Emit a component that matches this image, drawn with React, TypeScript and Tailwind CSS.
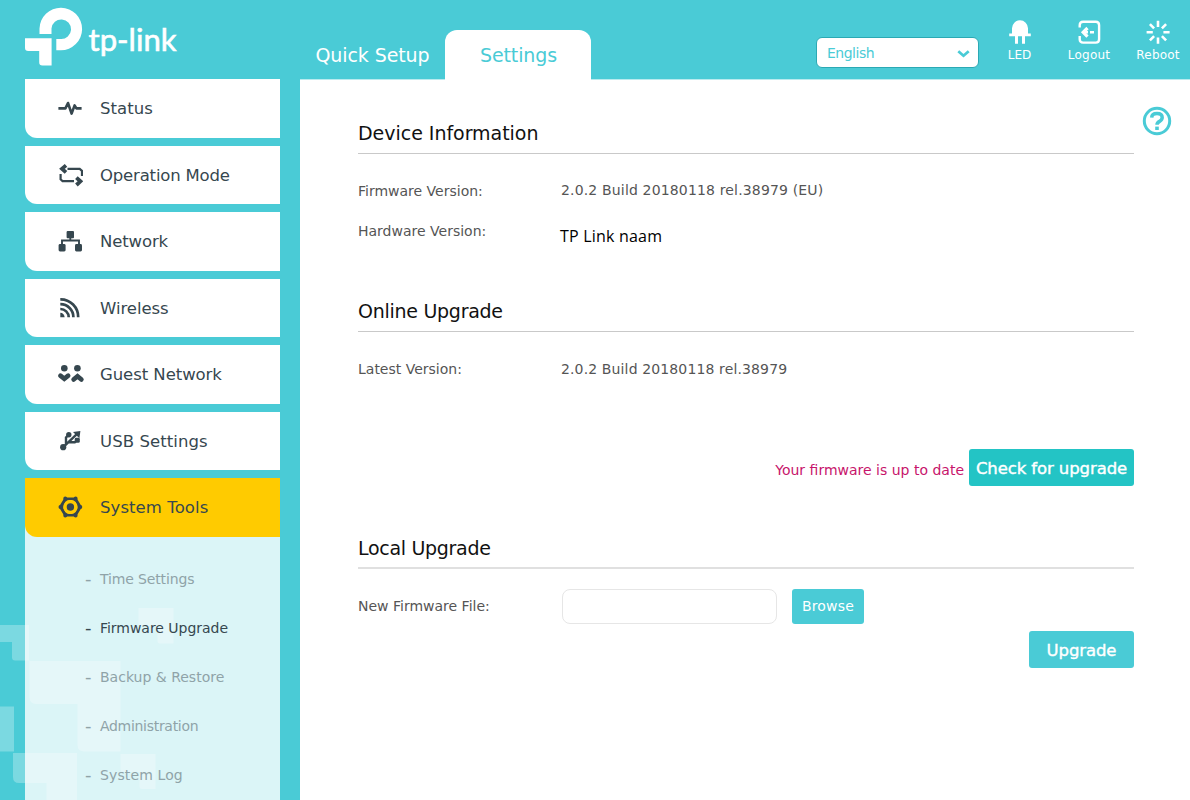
import React from "react";
import clsx from "clsx";

const StatusIcon = () => (
  <svg width="26" height="26" viewBox="0 0 26 26" fill="none" stroke="#36474f" strokeWidth="2.6">
    <path d="M1.4 13.4h7l2.6-5.4 3.6 10.6 3-8.2 1.8 3h5.2" strokeLinejoin="round" />
  </svg>
);

const ModeIcon = () => (
  <svg width="26" height="26" viewBox="0 0 26 26" fill="none" stroke="#36474f" strokeWidth="2.2">
    <path d="M10.5 6.8h12.2l2.3 2v5.2M3.6 12V17.2l2 2H17" />
    <path d="M9 3.4 5 6.8l4 3.6M19.4 15.6l4 3.7-4 3.7" strokeWidth="3.8" />
  </svg>
);

const NetworkIcon = () => (
  <svg width="26" height="26" viewBox="0 0 26 26" fill="#36474f">
    <rect x="9.6" y="3" width="7.4" height="7.2" rx="1" />
    <rect x="1.6" y="16" width="7" height="7.4" rx="1.4" />
    <rect x="18" y="16" width="7" height="7.4" rx="1.4" />
    <path d="M13.3 10v3.2M5 17v-4.5h17V17" fill="none" stroke="#36474f" strokeWidth="1.9" />
  </svg>
);

const WirelessIcon = () => (
  <svg width="26" height="26" viewBox="0 0 26 26" fill="none" stroke="#36474f" strokeWidth="2.7">
    <path d="M3.3 4.3A17.6 17.6 0 0 1 21.2 22.3M3.3 9.2A13 13 0 0 1 16.4 22.3M3.3 14a8.3 8.3 0 0 1 8.4 8.3" />
    <path d="M3.3 17.8a4.4 4.4 0 0 1 4.3 4.5H3.3z" fill="#36474f" stroke="none" />
  </svg>
);

const GuestIcon = () => (
  <svg width="28" height="26" viewBox="0 0 28 26" fill="#36474f">
    <circle cx="7.3" cy="7.3" r="3.3" />
    <circle cx="20.4" cy="7.3" r="3.3" />
    <g fill="none" stroke="#36474f" strokeWidth="4.6" strokeLinecap="round">
      <path d="m3.4 14.6 3.9 3.2 3.9-3.2" />
      <path d="m16.6 18.6 3.9-3.4 3.9 3.4" />
    </g>
  </svg>
);

const UsbIcon = () => (
  <svg width="26" height="26" viewBox="0 0 26 26" fill="none" stroke="#36474f" strokeWidth="2.4">
    <path d="M6 19.4 20.6 5.4M9 16.4V9.5L11.5 7M12 14.2h5.8l2.8-3" />
    <circle cx="6.2" cy="19.2" r="3.1" fill="#36474f" stroke="none" />
    <circle cx="11.8" cy="6.8" r="2.7" fill="#36474f" stroke="none" />
    <rect x="17.8" y="9.8" width="5" height="5" rx="1.4" fill="#36474f" stroke="none" />
    <path d="m16 4 7.4-1-1 7.2z" fill="#36474f" stroke="none" />
  </svg>
);

const ToolsIcon = () => (
  <svg width="26" height="26" viewBox="0 0 26 26" fill="none" stroke="#36474f">
    <path d="M8.4 4.8h10.2L23.4 13l-4.8 8.2H8.4L3.4 13z" strokeWidth="2.6" strokeLinejoin="round" />
    <circle cx="13.4" cy="13" r="8" strokeWidth="1.4" />
    <circle cx="13.4" cy="13" r="3.7" fill="#36474f" stroke="none" />
    <path d="M8.2 4.5h.1M18.6 4.5h.1M8.2 21.5h.1M18.6 21.5h.1M3.4 13h.1M23.3 13h.1" strokeWidth="3.8" strokeLinecap="round" />
  </svg>
);

const menu = [
  { name: "Status", icon: <StatusIcon />, spacing: "tracking-[0.05px]" },
  { name: "Operation Mode", icon: <ModeIcon />, spacing: "tracking-[-0.18px]" },
  { name: "Network", icon: <NetworkIcon />, spacing: "tracking-[-0.12px]" },
  { name: "Wireless", icon: <WirelessIcon />, spacing: "tracking-[-0.05px]" },
  { name: "Guest Network", icon: <GuestIcon />, spacing: "tracking-[-0.06px]" },
  { name: "USB Settings", icon: <UsbIcon />, spacing: "tracking-[0.08px]" },
  { name: "System Tools", icon: <ToolsIcon />, spacing: "tracking-[0.08px]", active: true },
];

const subMenu = [
  { name: "Time Settings", spacing: "tracking-[-0.14px]" },
  { name: "Firmware Upgrade", spacing: "tracking-[-0.03px]", active: true },
  { name: "Backup & Restore", spacing: "tracking-normal" },
  { name: "Administration", spacing: "tracking-[-0.3px]" },
  { name: "System Log", spacing: "tracking-[0.12px]" },
];

const Logo = () => (
  <svg width="156" height="62" viewBox="0 0 156 62" fill="#fff">
    <path d="M14.5 28V22.6a21.3 21.3 0 1 1 21.3 21.7h-4.5V33h4.5a9.8 9.8 0 1 0-9.3-10.6V28z" />
    <path d="M0 32.3h26.6v27.2H17.4q-3.2 0-3.2-3.2V45H3.2q-3.2 0-3.2-3.2z" />
    <text x="63.5" y="45" fontFamily="Lato, sans-serif" fontWeight="400" fontSize="30" textLength="88" lengthAdjust="spacingAndGlyphs" stroke="#fff" strokeWidth="0.6">
      tp-link
    </text>
  </svg>
);

const Squares = () => (
  <svg className="absolute bottom-0 left-0" width="180" height="200" viewBox="0 600 180 200" fill="#fff" fillOpacity="0.27">
    <path d="M0 625h29v35.5H15q-3 0-3-3V642H0z" />
    <path d="M29.5 661h91v90.5H84q-6.5 0-6.5-6.5v-41H36q-6.5 0-6.5-6.5z" />
    <path d="M0 706.5h14v45H0z" />
    <path d="M13 753h64v47H46.5v-17H19q-6 0-6-6z" />
    <path d="M138.5 608h35v35.5H160q-2.5 0-2.5-2.5v-15H141q-2.5 0-2.5-2.5z" />
    <path d="M120.5 754h35v35H142q-2.5 0-2.5-2.5V772H123q-2.5 0-2.5-2.5z" />
  </svg>
);

const Sidebar = () => {
  return (
    <div className="relative flex w-[255px] shrink-0 flex-col">
      <ul className="flex flex-col gap-2">
        {menu.map((item) => (
          <li key={item.name} className={clsx(item.active && "bg-[#dbf5f7]")}>
            <a
              className={clsx(
                "flex h-[58.5px] items-center rounded-bl-[12px] pl-8 text-[#36474f]",
                item.active ? "bg-[#ffcb00]" : "bg-white"
              )}
            >
              <span className="w-[43px]">{item.icon}</span>
              <span className={clsx("pt-[3px] text-[16.5px] whitespace-nowrap", item.spacing)}>{item.name}</span>
            </a>
          </li>
        ))}
      </ul>
      <ul className="flex-1 bg-white/80 pt-[18px]">
        {subMenu.map((item) => (
          <li
            key={item.name}
            className={clsx("flex h-[49px] items-center pl-[60px] text-[14px]", item.active ? "text-[#36474f]" : "text-[#8fa3a8]")}
          >
            <span className="w-[15px] pb-[2px] text-[18px]">-</span>
            <span className={clsx("whitespace-nowrap", item.spacing)}>{item.name}</span>
          </li>
        ))}
      </ul>
    </div>
  );
};

const Header = () => {
  return (
    <div className="relative z-10 flex h-[79px] items-end">
      <div className="w-[300px] self-start pt-1.5 pl-[25px]">
        <Logo />
      </div>
      <div className="-mb-px flex h-[50px] w-[145px] items-center justify-center text-[19px] tracking-[-0.1px] whitespace-nowrap text-white">
        Quick Setup
      </div>
      <div className="-mb-px flex h-[50px] w-[146px] items-center justify-center rounded-t-[12px] bg-white pl-px text-[19px] tracking-[-0.1px] text-[#4acbd6]">
        Settings
      </div>
      <div className="ml-auto flex h-full items-start pr-[9px]">
        <div className="mt-[37px] flex h-[31px] w-[163px] items-center justify-between rounded-[6px] border border-[#2ba9b4] bg-white pt-px pr-2 pl-2.5 text-[14px] tracking-[-0.5px] text-[#4acbd6]">
          <span>English</span>
          <svg width="13" height="9" viewBox="0 0 13 9" fill="none" stroke="#4acbd6" strokeWidth="2.8">
            <path d="m1.3 2.3 5.2 4.4 5.2-4.4" />
          </svg>
        </div>
        <div className="ml-[18px] flex w-[45px] flex-col items-center pt-[19px] text-[12px] leading-[20px] text-white">
          <svg width="24" height="26" viewBox="0 0 24 26" fill="#fff">
            <path d="M4 14.5V9.3a8 8 0 0 1 16 0v5.2h2.8v2.8H1.2v-2.8z" />
            <path d="M7 17h3v7.8H7zM14 17h3v7.8h-3z" />
          </svg>
          LED
        </div>
        <div className="ml-6 flex w-[46px] flex-col items-center pt-[19px] text-[12px] leading-[20px] tracking-[0.2px] text-white">
          <svg width="24" height="26" viewBox="0 0 24 26" fill="none" stroke="#fff" strokeWidth="2.4">
            <path d="M2.7 8.5V6.2q0-3.4 3.4-3.4h12.6q3.4 0 3.4 3.4v14q0 3.4-3.4 3.4H6.1q-3.4 0-3.4-3.4V17" />
            <path d="m10.5 9-4.3 4.3 4.3 4.3" strokeWidth="3.2" />
            <path d="M7 13.3h4M13 13.3h4" />
          </svg>
          Logout
        </div>
        <div className="ml-[23px] flex w-[46px] flex-col items-center pt-[19px] text-[12px] leading-[20px] tracking-[0.2px] text-white">
          <svg width="26" height="26" viewBox="0 0 26 26" fill="none" stroke="#fff" strokeWidth="2.6">
            <path d="M13 1.8v6.2M13 18.5v6.2M1.6 13.3h6.2M18.4 13.3h6.2M4.9 5.2l4.2 4.2M16.9 17.2l4.2 4.2M4.9 21.4l4.2-4.2M16.9 9.4l4.2-4.2" />
          </svg>
          Reboot
        </div>
      </div>
    </div>
  );
};

const Title = ({ children, className }: { children: React.ReactNode; className?: string }) => (
  <h2 className={clsx("h-[34px] text-[19px] leading-[26px] text-[#111]", className)}>{children}</h2>
);

const Row = ({ label, children }: { label: string; children?: React.ReactNode }) => (
  <div className="flex h-10 items-center text-[14px] text-[#555]">
    <span className="w-[203px]">{label}</span>
    {children}
  </div>
);

const Content = () => {
  return (
    <div className="relative ml-5 flex-1 border-t border-[#b9ebef] bg-white pr-14 pl-[58px]">
      <svg className="absolute top-[26px] right-[18px]" width="30" height="30" viewBox="0 0 30 30" fill="none" stroke="#4acbd6">
        <circle cx="15" cy="15" r="12.7" strokeWidth="3" />
        <path d="M9.7 11.6Q9.8 7.6 15 7.6t5.2 4q0 2.2-2.7 3.8-2.5 1.4-2.5 3.4" strokeWidth="3.5" />
        <path d="M15 20.6v3.4" strokeWidth="3.6" />
      </svg>

      <Title className="mt-10 border-b border-[#c9c9c9] tracking-[-0.03px]">Device Information</Title>
      <div className="mt-[17px]">
        <Row label="Firmware Version:">
          <span className="-mt-px tracking-[0.16px]">2.0.2 Build 20180118 rel.38979 (EU)</span>
        </Row>
        <Row label="Hardware Version:">
          <span className="-ml-px mt-[9px] font-['Open_Sans',sans-serif] text-[16px] tracking-[0.2px] text-black">TP Link naam</span>
        </Row>
      </div>

      <Title className="mt-[47px] border-b border-[#c9c9c9] tracking-[-0.27px]">Online Upgrade</Title>
      <div className="mt-[17px]">
        <Row label="Latest Version:">
          <span className="tracking-[0.13px]">2.0.2 Build 20180118 rel.38979</span>
        </Row>
      </div>
      <div className="mt-[60px] flex items-center justify-end gap-[5px]">
        <span className="pt-1.5 text-[14px] text-[#c7156b]">Your firmware is up to date</span>
        <button className="h-[37px] w-[165px] rounded-[3px] bg-[#23c4c5] pt-[3px] text-[16.5px] tracking-[-0.1px] whitespace-nowrap text-white [-webkit-text-stroke:0.4px_white]">
          Check for upgrade
        </button>
      </div>

      <Title className="mt-[49px] border-b-2 border-[#e0e0e0] tracking-[-0.3px]">Local Upgrade</Title>
      <div className="mt-[17px]">
        <Row label="New Firmware File:">
          <input className="ml-px h-[35px] w-[215px] rounded-[8px] border border-[#e6e6e6] bg-white" />
          <button className="ml-[15px] h-[35px] w-[72px] rounded-[3px] bg-[#4acbd6] pt-px tracking-[0.2px] text-white">Browse</button>
        </Row>
      </div>
      <div className="mt-[5px] flex justify-end">
        <button className="h-[37px] w-[105px] rounded-[3px] bg-[#4acbd6] pt-[3px] text-[16.5px] tracking-[-0.1px] text-white [-webkit-text-stroke:0.4px_white]">
          Upgrade
        </button>
      </div>
    </div>
  );
};

function App() {
  return (
    <div className="relative flex h-[800px] flex-col overflow-hidden bg-[#4acbd6] font-['DejaVu_Sans',Verdana,sans-serif]">
      <Squares />
      <Header />
      <div className="relative flex flex-1 pl-[25px]">
        <Sidebar />
        <Content />
      </div>
    </div>
  );
}

export default App;
